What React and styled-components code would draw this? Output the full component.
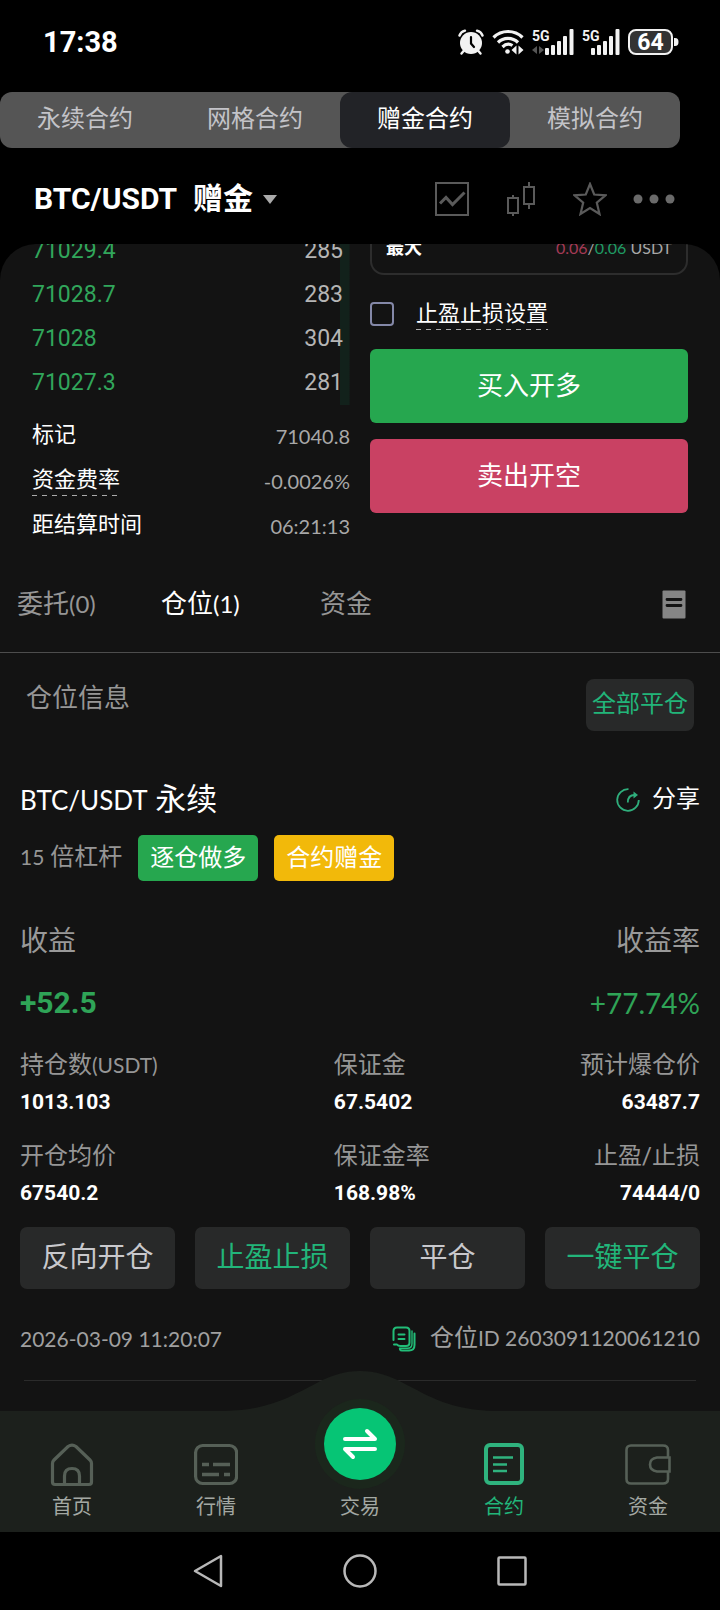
import React, { useState } from 'react';
import styled, { createGlobalStyle } from 'styled-components';

const bids = [
  { price: '71029.4', amount: 285, depth: 3 },
  { price: '71028.7', amount: 283, depth: 3 },
  { price: '71028', amount: 304, depth: 3 },
  { price: '71027.3', amount: 281, depth: 3 },
];

const contractTypes = ['永续合约', '网格合约', '赠金合约', '模拟合约'];

const stats = [
  { label: '持仓数', unit: '(USDT)', value: '1013.103' },
  { label: '保证金', value: '67.5402' },
  { label: '预计爆仓价', value: '63487.7' },
  { label: '开仓均价', value: '67540.2' },
  { label: '保证金率', value: '168.98%' },
  { label: '止盈/止损', value: '74444/0' },
];

const actions = [
  { label: '反向开仓' },
  { label: '止盈止损', accent: true },
  { label: '平仓' },
  { label: '一键平仓', accent: true },
];

export default function App() {
  const [type, setType] = useState('赠金合约');
  const [tab, setTab] = useState('positions');

  return (
    <Page>
      <GlobalStyle />
      <StatusBar>
        <Clock>17:38</Clock>
        <StatusIcons>
          <AlarmIcon />
          <WifiIcon />
          <SignalIcon data />
          <SignalIcon />
          <BatteryIcon />
        </StatusIcons>
      </StatusBar>

      <Segments>
        {contractTypes.map(name => (
          <Segment key={name} $active={name === type} onClick={() => setType(name)}>
            {name}
          </Segment>
        ))}
      </Segments>

      <Header>
        <PairButton>
          <span>BTC/USDT</span>
          <span>赠金</span>
          <Caret />
        </PairButton>
        <HeaderTools>
          <IconButton aria-label="走势图">
            <ChartIcon />
          </IconButton>
          <IconButton aria-label="K线">
            <CandleIcon />
          </IconButton>
          <IconButton aria-label="收藏">
            <StarIcon />
          </IconButton>
          <MoreButton aria-label="更多">
            <DotsIcon />
          </MoreButton>
        </HeaderTools>
      </Header>

      <Sheet>
        <TradeArea>
          <div>
            <BookTable>
              <tbody>
                {bids.map(({ price, amount, depth }) => (
                  <BookRow key={price} style={{ backgroundSize: `${depth}% 100%` }}>
                    <Price>{price}</Price>
                    <Amount>{amount}</Amount>
                  </BookRow>
                ))}
              </tbody>
            </BookTable>
            <MarketInfo>
              <InfoRow>
                <dt>标记</dt>
                <dd>71040.8</dd>
              </InfoRow>
              <InfoRow>
                <dt>
                  <Dashed>资金费率</Dashed>
                </dt>
                <dd>-0.0026%</dd>
              </InfoRow>
              <InfoRow>
                <dt>距结算时间</dt>
                <dd>06:21:13</dd>
              </InfoRow>
            </MarketInfo>
          </div>
          <div>
            <MaxBox>
              <strong>最大</strong>
              <MaxValue>
                <Red>0.06</Red>/<Green>0.06</Green> USDT
              </MaxValue>
            </MaxBox>
            <CheckLabel>
              <Checkbox type="checkbox" />
              <Dashed>止盈止损设置</Dashed>
            </CheckLabel>
            <OrderButtons>
              <OrderButton $color="#26a74f">买入开多</OrderButton>
              <OrderButton $color="#c94163">卖出开空</OrderButton>
            </OrderButtons>
          </div>
        </TradeArea>

        <TabBar>
          <Tab $active={tab === 'orders'} onClick={() => setTab('orders')}>
            委托<Latin $size={24}>(0)</Latin>
          </Tab>
          <Tab $active={tab === 'positions'} onClick={() => setTab('positions')}>
            仓位<Latin $size={24}>(1)</Latin>
          </Tab>
          <Tab $active={tab === 'assets'} onClick={() => setTab('assets')}>
            资金
          </Tab>
          <IconButton aria-label="历史记录">
            <RecordIcon />
          </IconButton>
        </TabBar>

        <SectionHead>
          <h2>仓位信息</h2>
          <CloseAll>全部平仓</CloseAll>
        </SectionHead>

        <Position>
          <PositionHead>
            <h3>
              <Latin $size={26}>BTC/USDT</Latin> 永续
            </h3>
            <ShareButton>
              <ShareIcon />
              分享
            </ShareButton>
          </PositionHead>
          <TagRow>
            <Leverage>
              <Latin $size={21}>15</Latin> 倍杠杆
            </Leverage>
            <Tag $color="#26a74f">逐仓做多</Tag>
            <Tag $color="#f2b90a">合约赠金</Tag>
          </TagRow>
          <Profit>
            <div>
              <dt>收益</dt>
              <ProfitValue>+52.5</ProfitValue>
            </div>
            <div>
              <dt>收益率</dt>
              <ProfitRate>+77.74%</ProfitRate>
            </div>
          </Profit>
          <Stats>
            {stats.map(({ label, unit, value }) => (
              <Stat key={label}>
                <dt>
                  {label}
                  {unit && <Latin $size={21}>{unit}</Latin>}
                </dt>
                <dd>{value}</dd>
              </Stat>
            ))}
          </Stats>
          <Actions>
            {actions.map(({ label, accent }) => (
              <ActionButton key={label} $accent={accent}>
                {label}
              </ActionButton>
            ))}
          </Actions>
          <PositionFoot>
            <time>2026-03-09 11:20:07</time>
            <PositionId>
              <IconButton aria-label="复制">
                <CopyIcon />
              </IconButton>
              <span>
                <Cjk>仓位</Cjk>ID 2603091120061210
              </span>
            </PositionId>
          </PositionFoot>
          <Divider />
        </Position>
      </Sheet>

      <BottomNav>
        <Hump viewBox="0 0 270 41">
          <path
            d="M0 41V40C45 39 66 25 90 13C106 4 120 0 135 0S164 4 180 13C204 25 225 39 270 40V41Z"
            fill="#1c201c"
          />
        </Hump>
        <NavItem href="#home">
          <HomeIcon />
          首页
        </NavItem>
        <NavItem href="#market">
          <MarketIcon />
          行情
        </NavItem>
        <NavItem href="#trade">
          <TradeCircle>
            <SwapIcon />
          </TradeCircle>
          交易
        </NavItem>
        <NavItem href="#contract" $active>
          <ContractIcon />
          合约
        </NavItem>
        <NavItem href="#assets">
          <WalletIcon />
          资金
        </NavItem>
      </BottomNav>

      <SystemNav>
        <IconButton aria-label="返回">
          <svg width="30" height="34" viewBox="0 0 30 34">
            <path d="M28 2V32L2 17Z" {...systemStroke} />
          </svg>
        </IconButton>
        <IconButton aria-label="主屏幕">
          <svg width="34" height="34" viewBox="0 0 34 34">
            <circle cx="17" cy="17" r="15.5" {...systemStroke} />
          </svg>
        </IconButton>
        <IconButton aria-label="最近任务">
          <svg width="30" height="34" viewBox="0 0 30 34">
            <rect x="1.5" y="3.5" width="27" height="27" rx="1" {...systemStroke} />
          </svg>
        </IconButton>
      </SystemNav>
    </Page>
  );
}

const systemStroke = {
  fill: 'none',
  stroke: '#b8b8b8',
  strokeWidth: 2.5,
  strokeLinejoin: 'round',
};

function AlarmIcon() {
  return (
    <svg width="26" height="26" viewBox="0 0 26 26" fill="#f2f2f2">
      <circle cx="13" cy="14" r="11" />
      <path
        d="M1.5 6.5C2.5 3.5 4 2.5 7 1.7M24.500 6.5C23.5 3.5 22 2.5 19 1.7M6 21.5L3.5 24.5M20 21.5L22.5 24.5"
        stroke="#f2f2f2"
        strokeWidth="2.4"
        fill="none"
        strokeLinecap="round"
      />
      <path d="M13 8V14.5L16 18" stroke="#000" strokeWidth="2.2" fill="none" strokeLinecap="round" />
    </svg>
  );
}

function WifiIcon() {
  return (
    <svg width="32" height="26" viewBox="0 0 32 26" fill="none" stroke="#f2f2f2" strokeWidth="3.2">
      <path d="M1.5 8.500C9.500 .5 22.5 .5 30.5 8.5M6 13.5C11.5 8 20.5 8 26 13.5M10.500 18C13.5 15 17.5 14.7 20.5 16.5" />
      <circle cx="15.5" cy="22.5" r="2.3" fill="#f2f2f2" stroke="none" />
      <path d="M24.5 16.5V25.5L19.5 21ZM26.5 16.5V25.5L31.5 21Z" fill="#f2f2f2" stroke="none" />
    </svg>
  );
}

function SignalIcon({ data }) {
  return (
    <svg width={data ? 42 : 38} height="26" viewBox={data ? '0 0 42 26' : '4 0 38 26'} fill="#f2f2f2">
      <text x={data ? 0 : 4} y="12" fontFamily="Roboto, sans-serif" fontSize="14" fontWeight="700">
        5G
      </text>
      {data && <path d="M5 17V25L0 21ZM7 17V25L12 21Z" fill="#555" />}
      <rect x="13" y="19" width="4" height="7" rx="1" />
      <rect x="19" y="16" width="4" height="10" rx="1" />
      <rect x="25" y="12" width="4" height="14" rx="1" />
      <rect x="31" y="7" width="4" height="19" rx="1" />
      <rect x="37.5" y="0" width="4" height="26" rx="1" />
    </svg>
  );
}

function BatteryIcon() {
  return (
    <svg width="51" height="26" viewBox="0 0 51 26">
      <rect x="1" y="1" width="43" height="24" rx="7" fill="#333" stroke="#f2f2f2" strokeWidth="2" />
      <path d="M46 9H47C49.5 9 50.5 10.5 50.5 13S49.5 17 47 17H46Z" fill="#f2f2f2" />
      <text
        x="22.5"
        y="21"
        textAnchor="middle"
        fontFamily="Roboto, sans-serif"
        fontSize="23"
        fontWeight="700"
        fill="#fff"
      >
        64
      </text>
    </svg>
  );
}

function ChartIcon() {
  return (
    <svg width="34" height="34" viewBox="0 0 34 34" fill="none" stroke="#5a5a5a" strokeWidth="2">
      <rect x="1" y="1" width="32" height="32" />
      <path d="M5 21.5L11 15.5L17.5 22.5L29.5 10.5" strokeWidth="3" />
    </svg>
  );
}

function CandleIcon() {
  return (
    <svg width="28" height="34" viewBox="0 0 28 34" fill="none" stroke="#5a5a5a" strokeWidth="2">
      <path d="M6 13V16M6 31V34M22 0V5M22 22V27" />
      <rect x="1" y="16" width="10" height="15" />
      <rect x="17" y="5" width="10" height="17" />
    </svg>
  );
}

function StarIcon() {
  return (
    <svg width="34" height="34" viewBox="0 0 34 34" fill="none" stroke="#5a5a5a" strokeWidth="2.2">
      <path d="M17 2L21.2 12.5L32.5 13.3L23.8 20.6L26.5 32L17 26L7.5 32L10.2 20.6L1.5 13.3L12.8 12.5Z" />
    </svg>
  );
}

function DotsIcon() {
  return (
    <svg width="42" height="10" viewBox="0 0 42 10" fill="#6a6a6a">
      <circle cx="5" cy="5" r="4.5" />
      <circle cx="21" cy="5" r="4.5" />
      <circle cx="37" cy="5" r="4.5" />
    </svg>
  );
}

function RecordIcon() {
  return (
    <svg width="24" height="29" viewBox="0 0 24 29">
      <rect x=".5" y=".5" width="23" height="28" rx="1" fill="#858585" />
      <path d="M5 9.5H19M5 15.5H19" stroke="#131313" strokeWidth="2.8" strokeLinecap="round" />
    </svg>
  );
}

function ShareIcon() {
  return (
    <svg width="24" height="24" viewBox="0 0 24 24" fill="none" stroke="#2fae7c" strokeWidth="1.8">
      <path d="M12.500 1.2A10.800 10.800 0 1 0 22.800 12" />
      <path d="M11.8 14.5C11.8 9 14 7 18.5 7" />
      <path d="M17.5 3.5L22 7L17.5 10.5Z" fill="#2fae7c" stroke="none" />
    </svg>
  );
}

function CopyIcon() {
  return (
    <svg
      width="24"
      height="26"
      viewBox="0 0 24 26"
      fill="none"
      stroke="#22bd78"
      strokeWidth="2"
      strokeLinecap="round"
      strokeLinejoin="round"
    >
      <path d="M1.5 14V5Q1.5 1.5 5 1.5H14Q17.5 1.5 17.5 5V16.5Q17.5 20 14 20H8.5Q6 20 5 18.500H2" />
      <path d="M22.5 7.5V19Q22.5 24.5 17 24.5H10Q8.5 24.5 8 23.500" />
      <path d="M20 5V17.5Q20 22.300 15.500 22.300H7.500" strokeWidth="1.4" />
      <path d="M6.5 8.500H12.500M6.5 13H12.5" />
    </svg>
  );
}

function HomeIcon() {
  return (
    <svg width="44" height="44" viewBox="0 0 44 44" fill="none" stroke="#566057" strokeWidth="3.2">
      <path d="M2.5 39V20.5Q2.5 18.5 4 17L18 3.5Q22 .8 26 3.5L40 17Q41.5 18.5 41.5 20.5V39Q41.5 41.5 39 41.5H5Q2.5 41.5 2.5 39Z" />
      <path d="M14.5 41V33Q14.5 25.5 22 25.5T29.5 33V41" />
    </svg>
  );
}

function MarketIcon() {
  return (
    <svg width="44" height="44" viewBox="0 0 44 44" fill="none" stroke="#566057" strokeWidth="3.2">
      <rect x="1.600" y="2.5" width="41" height="38" rx="7" />
      <path d="M8 21.5H15M19 21.5H36M8 31.5H25M30 31.5H36" strokeWidth="3.5" />
    </svg>
  );
}

function SwapIcon() {
  return (
    <svg
      width="36"
      height="32"
      viewBox="0 0 36 32"
      fill="none"
      stroke="#fff"
      strokeWidth="4"
      strokeLinecap="round"
      strokeLinejoin="round"
    >
      <path d="M3 11H33L25 3M33 21H3L11 29" />
    </svg>
  );
}

function ContractIcon() {
  return (
    <svg width="44" height="44" viewBox="0 0 44 44" fill="none" stroke="#2fb37e" strokeWidth="4">
      <rect x="4" y="2" width="36" height="38" rx="4" />
      <path d="M11 14.5H31M11 21.5H25M11 28H25" strokeWidth="2.6" />
    </svg>
  );
}

function WalletIcon() {
  return (
    <svg width="46" height="44" viewBox="0 0 46 44" fill="none" stroke="#566057" strokeWidth="2.6">
      <path d="M43 14V7Q43 2.5 38 2.5H6Q1.5 2.5 1.5 7V36Q1.5 40.5 6 40.5H38Q43 40.5 43 36V29" />
      <path d="M44.5 14.5V28.5H32Q25 27.5 25 21.5T32 14.5Z" />
    </svg>
  );
}

const GlobalStyle = createGlobalStyle`
  * {
    box-sizing: border-box;
  }
  body {
    margin: 0;
    background: #000;
    color: #fff;
    font-family: Roboto, 'Noto Sans CJK SC', sans-serif;
    line-height: 1.4;
  }
  h2, h3, dl, dd {
    margin: 0;
    font-weight: 400;
  }
  button {
    border: 0;
    padding: 0;
    background: none;
    color: inherit;
    font: inherit;
    cursor: pointer;
  }
  svg {
    display: block;
    flex: none;
  }
`;
const Page = styled.div`
  display: flex;
  flex-direction: column;
  min-height: 100vh;
`;
const StatusBar = styled.div`
  display: flex;
  align-items: center;
  justify-content: space-between;
  height: 92px;
  padding: 0 41px 8px 43px;
`;
const Clock = styled.time`
  font-size: 29px;
  font-weight: 700;
`;
const StatusIcons = styled.div`
  display: flex;
  align-items: center;
  gap: 8px;
`;
const Segments = styled.div`
  display: flex;
  margin-right: 40px;
  border-radius: 12px;
  background: #555;
`;
const Segment = styled.button`
  && {
    flex: 1;
    height: 56px;
    border-radius: 12px;
    color: ${props => (props.$active ? '#fff' : '#c3c3c8')};
    background: ${props => (props.$active ? '#222327' : 'none')};
    font-size: 24px;
  }
`;
const Header = styled.header`
  display: flex;
  align-items: center;
  justify-content: space-between;
  height: 96px;
  padding: 6px 45px 0 34px;
`;
const PairButton = styled.button`
  && {
    display: flex;
    align-items: center;
    gap: 16px;
    font-size: 30px;
    font-weight: 700;
  }
`;
const Caret = styled.i`
  margin-left: -6px;
  border: 7px solid transparent;
  border-top: 9px solid #aaa;
  border-bottom: 0;
`;
const HeaderTools = styled.div`
  display: flex;
  align-items: center;
  gap: 38px;
`;
const IconButton = styled.button`
  display: block;
`;
const MoreButton = styled(IconButton)`
  margin-left: -12px;
`;
const Sheet = styled.main`
  flex: 1;
  overflow: hidden;
  border-radius: 36px 36px 0 0;
  background: #131313;
`;
/* scrolled a little under the header */
const TradeArea = styled.section`
  display: grid;
  grid-template-columns: 1fr 1fr;
  gap: 20px;
  margin-top: -15px;
  padding: 0 32px;
`;
const BookTable = styled.table`
  width: 100%;
  border-collapse: collapse;
  font-size: 23px;
  td {
    height: 44px;
    padding: 0;
  }
`;
const BookRow = styled.tr`
  background: linear-gradient(#12211b, #12211b) right / 0 100% no-repeat;
`;
const Price = styled.td`
  color: #31a65b;
`;
const Amount = styled.td`
  color: #b5b5b5;
  text-align: right;
  && {
    padding-right: 7px;
  }
`;
const MarketInfo = styled.dl`
  margin-top: 8px;
`;
const InfoRow = styled.div`
  display: flex;
  align-items: center;
  justify-content: space-between;
  height: 45px;
  font-size: 22px;
  dd {
    color: #a8a8a8;
    font-family: Lato, sans-serif;
    font-size: 20px;
  }
`;
const Dashed = styled.span`
  display: block;
  height: 31px;
  line-height: 30px;
  background: repeating-linear-gradient(90deg, #aaa 0 5px, transparent 5px 10px) bottom / 100% 1px no-repeat;
`;
const MaxBox = styled.div`
  display: flex;
  justify-content: space-between;
  height: 46px;
  padding: 0 14px;
  border: 2px solid #2d2d2d;
  border-top: 0;
  border-radius: 0 0 14px 14px;
  font-size: 18px;
  line-height: 38px;
`;
const MaxValue = styled.span`
  color: #a8a8a8;
  font-family: Lato, sans-serif;
  font-size: 16px;
`;
const Red = styled.span`
  color: #a53a56;
`;
const Green = styled.span`
  color: #1f9c64;
`;
const CheckLabel = styled.label`
  display: flex;
  align-items: center;
  gap: 22px;
  height: 54px;
  margin: 12px 0 8px;
  font-size: 22px;
`;
const Checkbox = styled.input`
  appearance: none;
  width: 24px;
  height: 24px;
  margin: 0;
  border: 2px solid #8488a8;
  border-radius: 4px;
  &:checked {
    background: #26a74f;
  }
`;
const OrderButtons = styled.div`
  display: grid;
  gap: 16px;
`;
const OrderButton = styled.button`
  && {
    height: 74px;
    border-radius: 6px;
    background: ${props => props.$color};
    font-size: 26px;
  }
`;
const TabBar = styled.div`
  display: grid;
  grid-template-columns: 144px 159px 1fr auto;
  align-items: center;
  height: 97px;
  margin-top: 8px;
  padding: 0 34px 0 17px;
  border-bottom: 1px solid #4d4d4d;
`;
const Tab = styled.button`
  && {
    color: ${props => (props.$active ? '#fff' : '#969696')};
    font-size: 26px;
    text-align: left;
  }
`;
const Latin = styled.span`
  font-family: Lato, sans-serif;
  font-size: ${props => props.$size}px;
`;
const SectionHead = styled.div`
  display: flex;
  align-items: flex-start;
  justify-content: space-between;
  padding: 26px 26px 0;
  h2 {
    color: #969696;
    font-size: 26px;
    line-height: 38px;
  }
`;
const CloseAll = styled.button`
  && {
    height: 52px;
    padding: 0 6px;
    border-radius: 8px;
    background: #282929;
    color: #22b57a;
    font-size: 24px;
  }
`;
const Position = styled.section`
  padding: 45px 20px 30px;
`;
const PositionHead = styled.div`
  display: flex;
  align-items: center;
  justify-content: space-between;
  height: 48px;
  h3 {
    font-size: 31px;
    line-height: 48px;
  }
`;
const ShareButton = styled.button`
  && {
    display: flex;
    align-items: center;
    gap: 12px;
    font-size: 24px;
  }
`;
const TagRow = styled.div`
  display: flex;
  align-items: center;
  gap: 16px;
  margin-top: 11px;
`;
const Leverage = styled.span`
  color: #969696;
  font-size: 24px;
`;
const Tag = styled.span`
  height: 46px;
  padding: 0 12px;
  border-radius: 5px;
  background: ${props => props.$color};
  font-size: 24px;
  line-height: 46px;
`;
const Profit = styled.dl`
  display: flex;
  justify-content: space-between;
  margin-top: 41px;
  font-size: 28px;
  line-height: 40px;
  div:last-child {
    text-align: right;
  }
  dt {
    color: #999;
  }
`;
const ProfitValue = styled.dd`
  margin-top: 21px;
  color: #2fa457;
  font: 700 30px/40px Roboto, sans-serif;
`;
const ProfitRate = styled(ProfitValue)`
  font: 400 28px/40px Lato, sans-serif;
`;
const Stats = styled.dl`
  display: grid;
  grid-template-columns: 6fr 3fr 4fr;
  row-gap: 18px;
  margin-top: 24px;
`;
const Stat = styled.div`
  white-space: nowrap;
  &:nth-child(3n) {
    text-align: right;
  }
  dt {
    height: 37px;
    color: #969696;
    font-size: 24px;
    line-height: 36px;
  }
  dd {
    font: 700 21px/36px Roboto, sans-serif;
  }
`;
const Actions = styled.div`
  display: grid;
  grid-template-columns: repeat(4, 1fr);
  gap: 20px;
  margin-top: 16px;
`;
const ActionButton = styled.button`
  && {
    height: 62px;
    border-radius: 7px;
    background: #282929;
    color: ${props => (props.$accent ? '#22b57a' : '#c8c8cc')};
    font-size: 28px;
  }
`;
const PositionFoot = styled.div`
  display: flex;
  align-items: center;
  justify-content: space-between;
  height: 40px;
  margin-top: 30px;
  color: #a0a0a0;
  font-family: Lato, sans-serif;
  font-size: 21px;
`;
const PositionId = styled.div`
  display: flex;
  align-items: center;
  gap: 14px;
`;
const Cjk = styled.span`
  font-family: Roboto, 'Noto Sans CJK SC', sans-serif;
  font-size: 24px;
`;
const Divider = styled.hr`
  height: 1px;
  margin: 21px 4px 0;
  border: 0;
  background: #2b2b2b;
`;
const BottomNav = styled.nav`
  position: relative;
  display: flex;
  height: 121px;
  background: #1c201c;
`;
const Hump = styled.svg`
  position: absolute;
  bottom: 100%;
  left: 50%;
  width: 270px;
  margin: 0 0 -1px -135px;
`;
const NavItem = styled.a`
  position: relative;
  display: flex;
  flex: 1;
  flex-direction: column;
  align-items: center;
  justify-content: flex-end;
  gap: 6px;
  padding-bottom: 10px;
  color: ${props => (props.$active ? '#22b57a' : '#a3a8a3')};
  font-size: 20px;
  line-height: 29px;
  text-decoration: none;
`;
const TradeCircle = styled.span`
  display: flex;
  flex: none;
  align-items: center;
  justify-content: center;
  width: 72px;
  height: 72px;
  margin-bottom: 7px;
  border-radius: 50%;
  background: #06c575;
  box-shadow: 0 0 0 9px #1b271c;
`;
const SystemNav = styled.div`
  display: flex;
  align-items: center;
  justify-content: center;
  gap: 120px;
  height: 78px;
`;
